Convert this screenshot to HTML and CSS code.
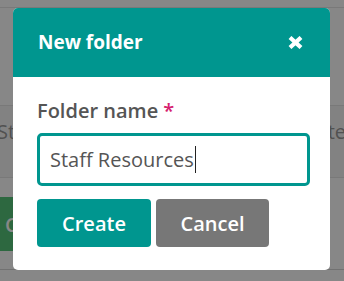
FILE: index.html
```html
<!DOCTYPE html>
<html lang="en">
<head>
    <meta charset="UTF-8">
    <meta name="viewport" content="width=device-width, initial-scale=1.0">
    <title>New folder</title>
    <link rel="stylesheet" href="styles.css">
</head>
<body>
    <div class="page">
        <div class="row row-top"></div>
        <div class="row row-item">
            <span class="cell-left">St</span>
            <span class="cell-right">te</span>
        </div>
        <div class="row row-actions">
            <button class="page-btn" type="button">C</button>
        </div>
    </div>

    <div class="backdrop"></div>

    <div class="modal" role="dialog" aria-labelledby="modalTitle">
        <div class="modal-header">
            <h2 id="modalTitle">New folder</h2>
            <button class="close" type="button" aria-label="Close">
                <svg width="15" height="13" viewBox="0 0 15 13">
                    <path d="M2 1.5 L13 11.5 M13 1.5 L2 11.5" stroke="#fff" stroke-width="4.2" fill="none"/>
                </svg>
            </button>
        </div>
        <div class="modal-body">
            <label class="field-label" for="folderName">Folder name <span class="req">*</span></label>
            <div class="field" id="folderName" role="textbox">Staff Resources<span class="caret"></span></div>
            <div class="actions">
                <button class="btn btn-primary" type="button">Create</button>
                <button class="btn btn-secondary" type="button">Cancel</button>
            </div>
        </div>
    </div>
</body>
</html>
```

FILE: styles.css
```css
body {
    font-family: "Open Sans", "Noto Sans", sans-serif;
    margin: 0;
    background-color: #fff;
    overflow: hidden;
}
.page {
    height: 281px;
    padding-top: 7px;
    box-sizing: border-box;
}
.row {
    border-top: 1px solid #e4e4e4;
}
.row-top {
    height: 97px;
}
.row-item {
    display: flex;
    justify-content: space-between;
    align-items: center;
    height: 72px;
    background-color: #f6f6f6;
    font-size: 20px;
    color: #999;
    padding: 0 0 20px 0;
    box-sizing: border-box;
    margin-left: -3px;
    margin-right: -2px;
}
.row-actions {
    height: 93px;
    padding-top: 19px;
    box-sizing: border-box;
    border-bottom: 1px solid #d6d6d6;
}
.page-btn {
    background-color: #56c47a;
    color: #fff;
    border: none;
    height: 54px;
    width: 60px;
    font-family: inherit;
    font-size: 20px;
    font-weight: 600;
    text-align: left;
    padding: 0 0 0 5px;
}
.backdrop {
    position: fixed;
    inset: 0;
    background-color: rgba(0, 0, 0, 0.47);
}
.modal {
    position: fixed;
    left: 13px;
    top: 8px;
    width: 317px;
    background: #fff;
    border-radius: 5px;
    overflow: hidden;
}
.modal-header {
    display: flex;
    align-items: center;
    justify-content: space-between;
    height: 69px;
    padding: 0 27px 0 25px;
    background-color: #00968f;
    color: #fff;
}
.modal-header h2 {
    margin: 0;
    font-size: 19px;
    font-weight: 700;
    padding-bottom: 2px;
}
.close {
    background: none;
    border: none;
    padding: 0;
    display: flex;
    cursor: pointer;
}
.modal-body {
    padding: 20px 20px 23px 24px;
}
.field-label {
    display: block;
    font-size: 20px;
    font-weight: 600;
    color: #555;
    margin-bottom: 9px;
}
.req {
    color: #d6206e;
}
.field {
    display: flex;
    align-items: center;
    height: 53px;
    padding: 0 10px;
    border: 3px solid #00968f;
    border-radius: 5px;
    box-sizing: border-box;
    font-size: 20px;
    color: #555;
}
.caret {
    display: inline-block;
    width: 1px;
    height: 27px;
    background-color: #222;
    margin-left: 1px;
}
.actions {
    display: flex;
    gap: 5px;
    margin-top: 13px;
}
.btn {
    height: 48px;
    border: none;
    border-radius: 4px;
    color: #fff;
    font-family: inherit;
    font-size: 20px;
    font-weight: 600;
    cursor: pointer;
}
.btn-primary {
    width: 114px;
    background-color: #00968f;
}
.btn-secondary {
    width: 113px;
    background-color: #777;
}
```
